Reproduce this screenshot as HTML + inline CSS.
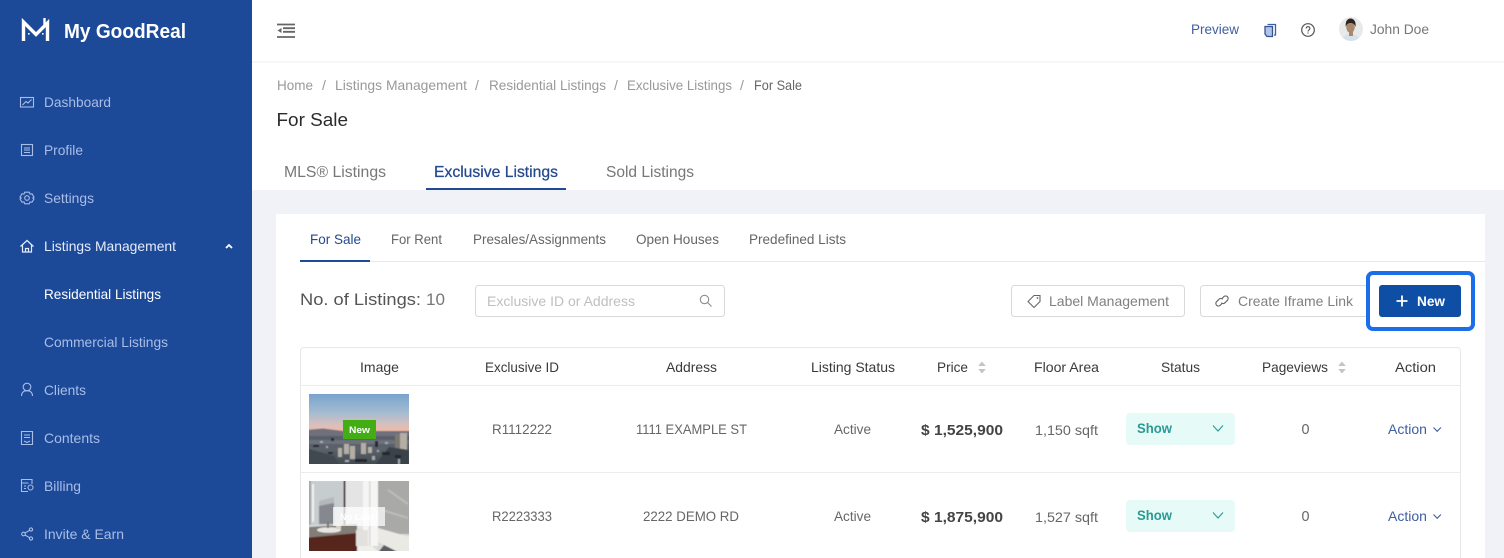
<!DOCTYPE html>
<html><head><meta charset="utf-8"><title>For Sale</title>
<style>
html,body{margin:0;padding:0;width:1504px;height:558px;overflow:hidden;background:#fff}
svg{display:block}
text{font-family:"Liberation Sans",sans-serif}
.n{font-size:14px;fill:#a9bde6}
.h{font-size:14px;fill:#3a3a3a}
.c{font-size:14px;fill:#666}
.g{font-size:14px;fill:#999}
.i{fill:none;stroke:#a9bde6;stroke-width:1.1}
</style></head><body>
<svg width="1504" height="558" viewBox="0 0 1504 558" xmlns="http://www.w3.org/2000/svg">
<defs>
<linearGradient id="sky" x1="0" y1="0" x2="0" y2="1"><stop offset="0" stop-color="#6f9fcb"/><stop offset=".55" stop-color="#a4bcd2"/><stop offset=".85" stop-color="#d9c0bc"/><stop offset="1" stop-color="#eeb9a4"/></linearGradient>
<linearGradient id="city" x1="0" y1="0" x2="0" y2="1"><stop offset="0" stop-color="#585c68"/><stop offset=".5" stop-color="#5b626a"/><stop offset="1" stop-color="#3f484f"/></linearGradient>
<clipPath id="av"><circle cx="1351" cy="29" r="12"/></clipPath>
<clipPath id="p1"><rect x="309" y="394" width="100" height="70"/></clipPath>
<clipPath id="p2"><rect x="309" y="481" width="100" height="70"/></clipPath>
<filter id="b" x="-5%" y="-5%" width="110%" height="110%"><feGaussianBlur stdDeviation=".6"/></filter>
</defs>
<rect width="1504" height="558" fill="#fff"/>
<rect x="252" y="190" width="1252" height="368" fill="#f0f2f7"/>
<rect x="252" y="61" width="1252" height="2" fill="#f5f6f8"/>
<rect x="0" y="0" width="252" height="558" fill="#1c4a99"/>

<!-- logo -->
<path d="M23.500 41V22L36 34.500L47.500 23V41" fill="none" stroke="#fff" stroke-width="3.400"/>
<path d="M44.500 18V26" stroke="#fff" stroke-width="2.400"/>
<rect x="28" y="33" width="1.600" height="1.600" fill="#fff"/><rect x="42" y="33" width="1.600" height="1.600" fill="#fff"/>
<text x="64" y="38" font-size="20" font-weight="700" fill="#fff" textLength="122" lengthAdjust="spacingAndGlyphs">My GoodReal</text>

<!-- nav -->
<text class="n" x="44" y="107" textLength="67" lengthAdjust="spacingAndGlyphs">Dashboard</text>
<text class="n" x="44" y="155" textLength="39" lengthAdjust="spacingAndGlyphs">Profile</text>
<text class="n" x="44" y="203" textLength="50" lengthAdjust="spacingAndGlyphs">Settings</text>
<text x="44" y="251" font-size="14" fill="#e4ebfa" textLength="132" lengthAdjust="spacingAndGlyphs">Listings Management</text>
<text x="44" y="299" font-size="14" fill="#fff" textLength="117" lengthAdjust="spacingAndGlyphs">Residential Listings</text>
<text class="n" x="44" y="347" textLength="124" lengthAdjust="spacingAndGlyphs">Commercial Listings</text>
<text class="n" x="44" y="395" textLength="42" lengthAdjust="spacingAndGlyphs">Clients</text>
<text class="n" x="44" y="443" textLength="56" lengthAdjust="spacingAndGlyphs">Contents</text>
<text class="n" x="44" y="491" textLength="37" lengthAdjust="spacingAndGlyphs">Billing</text>
<text class="n" x="44" y="539" textLength="80" lengthAdjust="spacingAndGlyphs">Invite &amp; Earn</text>

<!-- nav icons -->
<rect class="i" x="20.500" y="97.500" width="13" height="9.500"/><path class="i" d="M22.500 105l3.500-3.500 2 1.500 3.500-3.500"/>
<rect class="i" x="21.500" y="144.500" width="11" height="11"/><path class="i" d="M24 148h6M24 150h6M24 152.500h6"/>
<circle class="i" cx="27" cy="198" r="2.300"/><path class="i" d="M24.800 192.200h4.400l.8 1.800 2-.2 2 3.200-1.200 1 1.200 1-2 3.200-2-.2-.8 1.800h-4.400l-.8-1.800-2 .2-2-3.200 1.200-1-1.200-1 2-3.200 2 .2z"/>
<path d="M20.500 246.500L27 240.500l6.500 6M22.500 245v7h9v-7M25.500 252v-3.500h3v3.500" fill="none" stroke="#e4ebfa" stroke-width="1.200"/>
<path d="M226 248l3-3 3 3" fill="none" stroke="#fff" stroke-width="1.800"/>
<circle class="i" cx="27" cy="387" r="3.800"/><path class="i" d="M21.500 396c0-3.500 2.200-5.300 5.500-5.300s5.500 1.800 5.500 5.300"/>
<path class="i" d="M21.500 431.500h11v13h-11zM24 435h6M24 437.500h6M24 441l3 1.500 3-1.500"/>
<path class="i" d="M32 484v-4.500H21.500v12H28M21.500 483h7M24 486h2M24 488.500h2"/><circle class="i" cx="30.500" cy="487.500" r="2.500"/>
<circle class="i" cx="23.500" cy="534" r="1.800"/><circle class="i" cx="31" cy="529.500" r="1.600"/><circle class="i" cx="31" cy="538.500" r="1.600"/><path class="i" d="M25 533l4.500-2.700M25 535l4.500 2.700"/>

<!-- top header -->
<path d="M277 24.500h18M283 28.200h12M283 31.800h12M277 37h18" stroke="#666" stroke-width="1.800" fill="none"/>
<path d="M281.500 28l-4 2.500 4 2.500z" fill="#666"/>
<text x="1191" y="34" font-size="14" fill="#3f5f9f" textLength="48" lengthAdjust="spacingAndGlyphs">Preview</text>
<path d="M1267.500 24.500h8v10.500h-1.500" fill="none" stroke="#3c5f9f" stroke-width="1.300"/>
<path d="M1265 26.500h7.500V36.500h-5.500L1265 34z" fill="#b4c4e0" stroke="#2f5298" stroke-width="1.300"/>
<circle cx="1308" cy="30" r="6.300" fill="none" stroke="#555" stroke-width="1.200"/>
<path d="M1306.200 28.500c0-2.400 3.700-2.400 3.700 0 0 1.500-1.900 1.400-1.900 3" fill="none" stroke="#555" stroke-width="1.100"/><rect x="1307.500" y="32.500" width="1.100" height="1.100" fill="#555"/>
<circle cx="1351" cy="29" r="12" fill="#e8eaea"/>
<g clip-path="url(#av)"><ellipse cx="1351" cy="41" rx="9" ry="7" fill="#d6e2ea"/><rect x="1349" y="31" width="4" height="5" fill="#a98870"/><ellipse cx="1350.500" cy="27" rx="4.300" ry="5.800" fill="#a98870"/><path d="M1345.800 27c-.8-6 2-8.500 4.800-8.500s5.700 2.500 5 8.500c-1-3-2.500-4-5-4s-4 1-4.800 4z" fill="#2f231d"/></g>
<text x="1370" y="34" font-size="14" fill="#777" textLength="59" lengthAdjust="spacingAndGlyphs">John Doe</text>

<!-- breadcrumb -->
<text class="g" x="277" y="90" textLength="36" lengthAdjust="spacingAndGlyphs">Home</text>
<text class="g" x="322" y="90">/</text>
<text class="g" x="335" y="90" textLength="132" lengthAdjust="spacingAndGlyphs">Listings Management</text>
<text class="g" x="475" y="90">/</text>
<text class="g" x="489" y="90" textLength="117" lengthAdjust="spacingAndGlyphs">Residential Listings</text>
<text class="g" x="614" y="90">/</text>
<text class="g" x="627" y="90" textLength="105" lengthAdjust="spacingAndGlyphs">Exclusive Listings</text>
<text class="g" x="740" y="90">/</text>
<text class="c" x="754" y="90" textLength="48" lengthAdjust="spacingAndGlyphs">For Sale</text>
<text x="276.500" y="126" font-size="18.500" fill="#2b2b2b" textLength="71.500" lengthAdjust="spacingAndGlyphs">For Sale</text>

<!-- tabs -->
<text x="284" y="177" font-size="16" fill="#777" textLength="102" lengthAdjust="spacingAndGlyphs">MLS® Listings</text>
<text x="434" y="177" font-size="16" fill="#24498f" textLength="124" lengthAdjust="spacingAndGlyphs" stroke="#24498f" stroke-width=".25">Exclusive Listings</text>
<text x="606" y="177" font-size="16" fill="#777" textLength="88" lengthAdjust="spacingAndGlyphs">Sold Listings</text>
<rect x="426" y="188" width="140" height="2" fill="#1f4a96"/>

<!-- card -->
<rect x="276" y="214" width="1209" height="344" fill="#fff"/>
<rect x="300" y="261" width="1185" height="1" fill="#e8e8e8"/>
<rect x="300" y="260" width="70" height="2" fill="#1f4a96"/>
<text x="310" y="244" font-size="14" fill="#24498f" textLength="51" lengthAdjust="spacingAndGlyphs">For Sale</text>
<text class="c" x="391" y="244" textLength="51" lengthAdjust="spacingAndGlyphs">For Rent</text>
<text class="c" x="473" y="244" textLength="133" lengthAdjust="spacingAndGlyphs">Presales/Assignments</text>
<text class="c" x="636" y="244" textLength="83" lengthAdjust="spacingAndGlyphs">Open Houses</text>
<text class="c" x="749" y="244" textLength="97" lengthAdjust="spacingAndGlyphs">Predefined Lists</text>

<text x="300" y="305" font-size="17" fill="#555" textLength="121" lengthAdjust="spacingAndGlyphs">No. of Listings:</text>
<text x="426" y="305" font-size="17" fill="#777" textLength="19" lengthAdjust="spacingAndGlyphs">10</text>

<!-- search -->
<rect x="475.500" y="285.500" width="249" height="31" rx="3" fill="#fff" stroke="#d9d9d9"/>
<text x="487" y="306" font-size="14" fill="#bfbfbf" textLength="148" lengthAdjust="spacingAndGlyphs">Exclusive ID or Address</text>
<circle cx="704.500" cy="299.500" r="4.200" fill="none" stroke="#8c8c8c" stroke-width="1.100"/><path d="M707.500 302.500l4 4" stroke="#8c8c8c" stroke-width="1.100"/>

<!-- buttons -->
<rect x="1011.500" y="285.500" width="173" height="31" rx="3" fill="#fff" stroke="#d9d9d9"/>
<path d="M1028 301.500l6-6h6v6l-6 6z" fill="none" stroke="#666" stroke-width="1.100"/>
<circle cx="1037.500" cy="298" r=".9" fill="#666"/>
<text x="1049" y="306" font-size="14" fill="#808080" textLength="120" lengthAdjust="spacingAndGlyphs">Label Management</text>
<rect x="1200.500" y="285.500" width="180" height="31" rx="3" fill="#fff" stroke="#d9d9d9"/>
<path d="M1222 303.500l-1.800 1.800a2.500 2.500 0 0 1-3.600-3.600l2.500-2.500a2.500 2.500 0 0 1 3.600 0M1222 298.500l1.800-1.800a2.500 2.500 0 0 1 3.600 3.600l-2.500 2.500a2.500 2.500 0 0 1-3.600 0" fill="none" stroke="#666" stroke-width="1.100"/>
<text x="1238" y="306" font-size="14" fill="#808080" textLength="115" lengthAdjust="spacingAndGlyphs">Create Iframe Link</text>
<rect x="1368" y="273" width="105" height="56" rx="5" fill="#fff" stroke="#1b6eea" stroke-width="4"/>
<rect x="1379" y="285" width="82" height="32" rx="3" fill="#0e4fa5"/>
<path d="M1402 295.500v11M1396.500 301h11" stroke="#fff" stroke-width="1.800"/>
<text x="1417" y="306" font-size="14" font-weight="700" fill="#fff" textLength="28" lengthAdjust="spacingAndGlyphs">New</text>

<!-- table -->
<path d="M300.500 558V351a3.500 3.500 0 0 1 3.500-3.500h1153a3.500 3.500 0 0 1 3.500 3.500V558" fill="none" stroke="#e8e8e8"/>
<rect x="301" y="385" width="1159" height="1" fill="#ececec"/>
<rect x="301" y="472" width="1159" height="1" fill="#ececec"/>
<text class="h" x="360" y="372" textLength="39" lengthAdjust="spacingAndGlyphs">Image</text>
<text class="h" x="485" y="372" textLength="74" lengthAdjust="spacingAndGlyphs">Exclusive ID</text>
<text class="h" x="666" y="372" textLength="51" lengthAdjust="spacingAndGlyphs">Address</text>
<text class="h" x="811" y="372" textLength="84" lengthAdjust="spacingAndGlyphs">Listing Status</text>
<text class="h" x="937" y="372" textLength="31" lengthAdjust="spacingAndGlyphs">Price</text>
<path d="M982 361.500l3.800 4.500h-7.600zM982 373.500l3.800-4.500h-7.600z" fill="#c4c4c4"/>
<text class="h" x="1034" y="372" textLength="65" lengthAdjust="spacingAndGlyphs">Floor Area</text>
<text class="h" x="1161" y="372" textLength="39" lengthAdjust="spacingAndGlyphs">Status</text>
<text class="h" x="1262" y="372" textLength="66" lengthAdjust="spacingAndGlyphs">Pageviews</text>
<path d="M1342 361.500l3.800 4.500h-7.600zM1342 373.500l3.800-4.500h-7.600z" fill="#c4c4c4"/>
<text class="h" x="1395" y="372" textLength="41" lengthAdjust="spacingAndGlyphs">Action</text>

<!-- photo 1 -->
<g clip-path="url(#p1)"><g filter="url(#b)">
<rect x="305" y="390" width="108" height="41" fill="url(#sky)"/>
<rect x="305" y="431" width="108" height="36" fill="url(#city)"/>
<path d="M305 430l18-1.500 20 2.500 70 0v5H305z" fill="#6f6f7c"/>
<path d="M309 440h100v4H309z" fill="#7a7f86" opacity=".6"/>
<g fill="#b4aea6"><rect x="400" y="433" width="7" height="17"/><rect x="344" y="444" width="5" height="10"/><rect x="350" y="446" width="5" height="13"/><rect x="361" y="443" width="5" height="11"/><rect x="338" y="448" width="4" height="9"/><rect x="368" y="447" width="4" height="6"/></g>
<rect x="395" y="434" width="5" height="15" fill="#7c7872"/>
<rect x="320" y="456" width="8" height="9" fill="#b7a184"/>
<rect x="311" y="459" width="6" height="6" fill="#8f9aa0"/>
<path d="M309 449l25 7 6 9h-31z" fill="#414a50"/><path d="M375 465l14-18 20 3v15z" fill="#3a434a"/>
<g fill="#20272d"><rect x="331" y="438" width="3" height="3"/><rect x="375" y="441" width="3" height="6"/><rect x="355" y="459" width="12" height="3"/><rect x="382" y="452" width="8" height="3"/><rect x="313" y="445" width="6" height="2"/><rect x="328" y="452" width="5" height="2"/><rect x="395" y="455" width="6" height="3"/></g>
<g fill="#a3aab0"><rect x="320" y="441" width="3" height="2"/><rect x="372" y="456" width="3" height="4"/><rect x="385" y="442" width="3" height="2"/><rect x="398" y="459" width="2" height="5"/><rect x="345" y="460" width="4" height="2"/><rect x="326" y="446" width="2" height="2"/><rect x="377" y="450" width="2" height="2"/></g>
</g></g>
<rect x="343" y="420" width="33" height="19" fill="#43ad14"/>
<text x="359.500" y="433" font-size="9" font-weight="700" fill="#fff" text-anchor="middle" textLength="21" lengthAdjust="spacingAndGlyphs">New</text>

<!-- photo 2 -->
<g clip-path="url(#p2)"><g filter="url(#b)">
<rect x="305" y="477" width="108" height="78" fill="#d8d9d8"/>
<rect x="309" y="481" width="35" height="44" fill="#c7cccf"/>
<rect x="305" y="477" width="6" height="48" fill="#a4a9ab"/>
<rect x="312" y="484" width="2" height="38" fill="#f2f2f2"/>
<rect x="319" y="501" width="15" height="23" fill="#85888e"/>
<path d="M319 501l15-4v6l-15 3z" fill="#b3b8bd"/>
<rect x="343.500" y="477" width="2" height="48" fill="#4d433c"/>
<rect x="346" y="477" width="17" height="52" fill="#e3e4e3"/>
<rect x="363" y="477" width="15" height="69" fill="#f5f5f3"/>
<rect x="369" y="477" width="1.500" height="69" fill="#d8d8d6"/>
<rect x="378" y="477" width="35" height="57" fill="#a9a9a8"/>
<path d="M388 490l20 14M382 510l26 8" stroke="#bcbcba" stroke-width="2" fill="none"/>
<path d="M378 528l35 10v17h-10l-25-13z" fill="#ebe9e3"/>
<path d="M309 527l48-3v9l-48 5z" fill="#827d76"/>
<ellipse cx="329" cy="530" rx="12" ry="2.800" fill="#e8e6e0"/>
<rect x="327" y="522" width="2" height="6" fill="#777"/>
<path d="M305 538l52-5v22h-52z" fill="#56281a"/>
<rect x="356" y="530" width="12" height="16" fill="#e2e1dd"/>
<path d="M358 546h14l6 5v4h-20z" fill="#f0efeb"/>
<path d="M376 555l8-10 20 10z" fill="#5b5b62"/>
<rect x="336" y="525" width="5" height="4" fill="#d9cfc2"/>
</g></g>
<rect x="333" y="507" width="52" height="19" fill="#fff" opacity=".72"/>
<text x="359" y="520" font-size="9" font-weight="700" fill="#fff" text-anchor="middle" textLength="38" lengthAdjust="spacingAndGlyphs">No Label</text>

<!-- row 1 -->
<text class="c" x="492" y="434" textLength="60" lengthAdjust="spacingAndGlyphs">R1112222</text>
<text class="c" x="636" y="434" textLength="111" lengthAdjust="spacingAndGlyphs">1111 EXAMPLE ST</text>
<text class="c" x="834" y="434" textLength="37" lengthAdjust="spacingAndGlyphs">Active</text>
<text x="921" y="435" font-size="15" font-weight="700" fill="#444" textLength="82" lengthAdjust="spacingAndGlyphs">$ 1,525,900</text>
<text class="c" x="1035" y="435" textLength="63" lengthAdjust="spacingAndGlyphs">1,150 sqft</text>
<rect x="1126" y="413" width="109" height="32" rx="4" fill="#e6fbf7"/>
<text x="1137" y="433" font-size="14" font-weight="700" fill="#2b9a94" textLength="35" lengthAdjust="spacingAndGlyphs">Show</text>
<path d="M1213 425.500l5 5.500 5-5.500" fill="none" stroke="#2b9a94" stroke-width="1.100"/>
<text x="1301.500" y="434" font-size="15" fill="#666" textLength="8" lengthAdjust="spacingAndGlyphs">0</text>
<text x="1388" y="434" font-size="14" fill="#3f5f9f" textLength="39" lengthAdjust="spacingAndGlyphs">Action</text>
<path d="M1433.500 427.500l3.700 3.800 3.700-3.800" fill="none" stroke="#3f5f9f" stroke-width="1.100"/>

<!-- row 2 -->
<text class="c" x="492" y="521" textLength="60" lengthAdjust="spacingAndGlyphs">R2223333</text>
<text class="c" x="643" y="521" textLength="96" lengthAdjust="spacingAndGlyphs">2222 DEMO RD</text>
<text class="c" x="834" y="521" textLength="37" lengthAdjust="spacingAndGlyphs">Active</text>
<text x="921" y="522" font-size="15" font-weight="700" fill="#444" textLength="82" lengthAdjust="spacingAndGlyphs">$ 1,875,900</text>
<text class="c" x="1035" y="522" textLength="63" lengthAdjust="spacingAndGlyphs">1,527 sqft</text>
<rect x="1126" y="500" width="109" height="32" rx="4" fill="#e6fbf7"/>
<text x="1137" y="520" font-size="14" font-weight="700" fill="#2b9a94" textLength="35" lengthAdjust="spacingAndGlyphs">Show</text>
<path d="M1213 512.500l5 5.500 5-5.500" fill="none" stroke="#2b9a94" stroke-width="1.100"/>
<text x="1301.500" y="521" font-size="15" fill="#666" textLength="8" lengthAdjust="spacingAndGlyphs">0</text>
<text x="1388" y="521" font-size="14" fill="#3f5f9f" textLength="39" lengthAdjust="spacingAndGlyphs">Action</text>
<path d="M1433.500 514.500l3.700 3.800 3.700-3.800" fill="none" stroke="#3f5f9f" stroke-width="1.100"/>
</svg>
</body></html>
